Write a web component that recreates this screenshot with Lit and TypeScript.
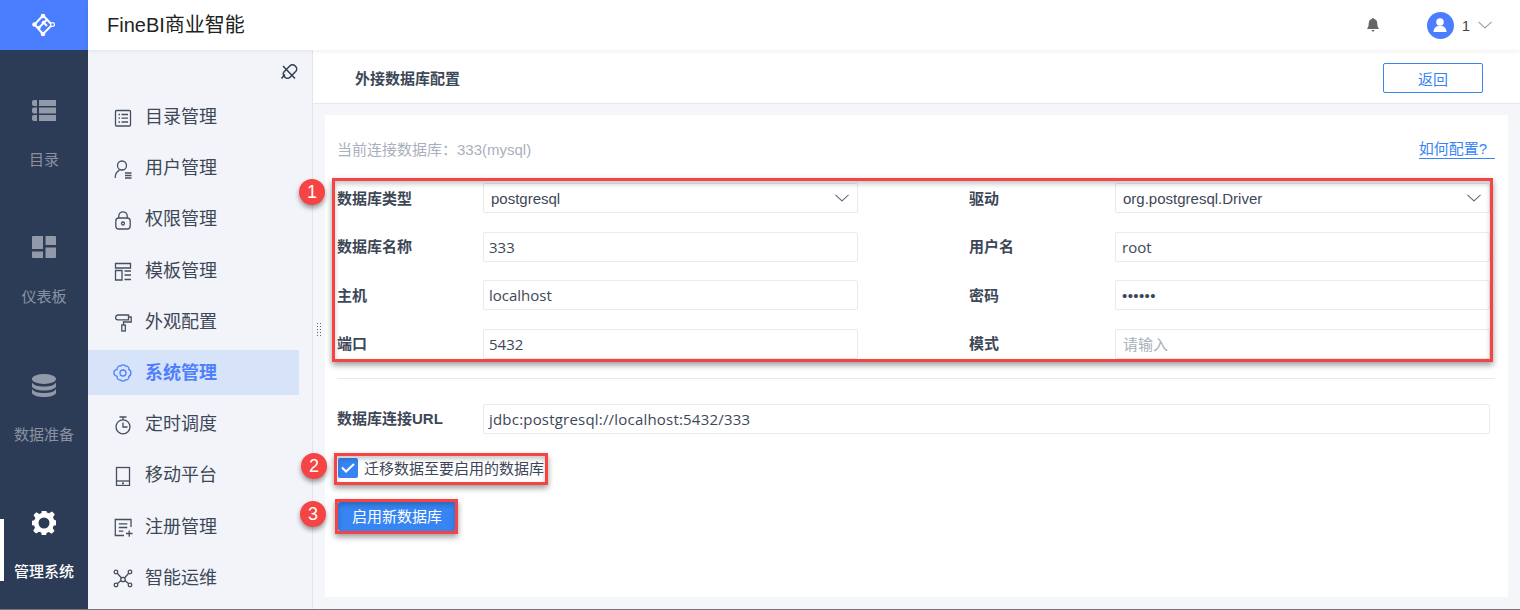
import { LitElement, html, css, svg } from "lit";
import { customElement } from "lit/decorators.js";

const S = (c: unknown) => html`<svg viewBox="0 0 20 20" width="20" height="20" fill="none" stroke="currentColor" stroke-width="1.300">${c}</svg>`;
const menu = [
  ["目录管理", S(svg`<rect x="2.500" y="2.500" width="15" height="15.500" rx="1"/><path d="M5.500 6.500h1.500M8.500 6.500h6.500M5.500 10.200h1.500M8.500 10.200h6.500M5.500 14h1.500M8.500 14h6.500"/>`)],
  ["用户管理", S(svg`<circle cx="9" cy="6.500" r="4.500"/><path d="M2.200 19c0-4 1.800-6.500 4.300-7.800M12 14h6.500M12 16.500h6.500M12 19h6.500"/>`)],
  ["权限管理", S(svg`<rect x="2.800" y="8" width="14.400" height="11" rx="3"/><path d="M5.800 8V6a4.200 4.200 0 0 1 8.400 0v2"/><circle cx="10" cy="13.500" r="1.500"/>`)],
  ["模板管理", S(svg`<path d="M2.500 2.500h15v4.500h-15zM2.500 9.500h6.500v9.500h-6.500zM11.500 10h6.500M11.500 14h6.500M11.500 18.500h6.500"/>`)],
  ["外观配置", S(svg`<path d="M5 3h10.500v4.800H5a2.400 2.400 0 0 1 0-4.800zM15.500 5h2.700v5H10.500v3"/><rect x="8.800" y="13" width="3.500" height="6"/>`)],
  ["系统管理", S(svg`<path d="M17.800 10a3 3 0 0 1-2 3.300 3 3 0 0 1-3.500 3.700 3 3 0 0 1-4.600 0 3 3 0 0 1-3.500-3.700 3 3 0 0 1 0-6.600 3 3 0 0 1 3.500-3.700 3 3 0 0 1 4.600 0 3 3 0 0 1 3.500 3.700 3 3 0 0 1 2 3.300z" stroke-linejoin="round"/><circle cx="10" cy="10" r="3"/>`)],
  ["定时调度", S(svg`<circle cx="10" cy="11.800" r="7"/><path d="M6.500 2h7M10 2v3M10 7.500v4.500h4.500"/>`)],
  ["移动平台", S(svg`<rect x="3.500" y="1.500" width="13" height="18"/><path d="M3.500 15h13"/><path d="M9 16.600h2v1.600H9z" fill="currentColor" stroke="none"/>`)],
  ["注册管理", S(svg`<path d="M18 10V2.500H2.300V18.500H11M5.800 6.800h8.500M5.800 10.500h8.500M5.800 14.200h4.500M13 16.500h6.500M16.200 13.500v6.200"/>`)],
  ["智能运维", S(svg`<circle cx="10" cy="11.500" r="2.200"/><circle cx="3" cy="4" r="1.800"/><circle cx="17" cy="4" r="1.800"/><circle cx="3" cy="17" r="1.800"/><circle cx="17" cy="17" r="1.800"/><path d="M4.300 5.300 8.500 10M15.700 5.300 11.500 10M4.300 15.700 8 12.500M15.700 15.700 12 12.500"/>`)],
] as const;

const rail = [
  ["目录", svg`<path d="M2 1h3v6H2a2 2 0 0 1-2-2V3a2 2 0 0 1 2-2zM2 8.500h3v6H2a2 2 0 0 1-2-2v-2a2 2 0 0 1 2-2zM2 16h3v6H2a2 2 0 0 1-2-2v-2a2 2 0 0 1 2-2zM7 1h17v6H7zM7 8.500h17v6H7zM7 16h17v6H7z"/>`],
  ["仪表板", svg`<path d="M1 0h10v13H0V1a1 1 0 0 1 1-1zM13.500 0H23a1 1 0 0 1 1 1v8H13.500zM13.500 11.500H24V21a1 1 0 0 1-1 1h-9.500zM0 15.500h11V22H1a1 1 0 0 1-1-1z"/>`],
  ["数据准备", svg`<ellipse cx="12" cy="5" rx="12" ry="5"/><path d="M0 8.500c2 3 6 4 12 4s10-1 12-4v4c-1 2.500-6 4-12 4S1 15 0 12.500zM0 15c2 3 6 4 12 4s10-1 12-4v4c-1 2.500-6 4-12 4S1 21.500 0 19z"/>`],
  ["管理系统", svg`<path fill-rule="evenodd" d="M10 -1h4l.8 3.400 2.200.9 3-1.800 2.800 2.800-1.800 3 .9 2.200L25 11v4l-3.400.8-.9 2.200 1.800 3-2.800 2.800-3-1.800-2.200.9L14 26h-4l-.8-3.400-2.200-.9-3 1.800-2.800-2.800 1.800-3-.9-2.200L-1 15v-4l3.400-.8.9-2.200-1.800-3 2.800-2.800 3 1.800 2.200-.9zM12 7.500a5.500 5.500 0 1 0 0 11 5.500 5.500 0 0 0 0-11z" transform="translate(0 -1)"/>`],
] as const;

const chevron = html`<svg class="chev" viewBox="0 0 14 8" width="14" height="8" fill="none" stroke="currentColor" stroke-width="1.100"><path d="M.5.8 7 7 13.500.8"/></svg>`;

@customElement("form-field")
class FormField extends LitElement {
  static properties = { value: {}, kind: {} };
  value = "";
  kind = "";
  static styles = css`
    :host { display: block; }
    .box { display: flex; align-items: center; justify-content: space-between; box-sizing: border-box; height: 30px;
      border: 1px solid #e8eaee; border-radius: 2px; background: #fff; color: #3d4757; font-size: 15px; padding: 0 8px 0 5px; white-space: nowrap;
      font-family: "Open Sans", "Noto Sans CJK SC", sans-serif; }
    .select { padding-left: 7px; font-family: "Liberation Sans", "Noto Sans CJK SC", sans-serif; }
    .narrow { padding-left: 6px; }
    .hint { padding-left: 7px; color: #a9b0bd; }
    .dots { padding-left: 6px; font-family: "Liberation Sans", sans-serif; letter-spacing: .4px; }
    .url { letter-spacing: .2px; }
    .chev { color: #667080; }
  `;
  render() {
    return html`<div class="box ${this.kind}"><span>${this.value}</span>${this.kind === "select" ? chevron : ""}</div>`;
  }
}

@customElement("app-root")
class AppRoot extends LitElement {
  static styles = css`
    :host { display: block; width: 1520px; height: 610px; overflow: hidden; position: relative;
      font-family: "Liberation Sans", "Noto Sans CJK SC", sans-serif; font-size: 15px; color: #3d4757; }
    .page { display: flex; height: 609px; border-bottom: 1px solid #777; }
    .rail { width: 88px; flex: none; background: #2c3c57; display: flex; flex-direction: column; }
    .logo { height: 50px; background: #4a7eff; display: flex; align-items: center; justify-content: center; flex: none; }
    .rail-items { display: flex; flex-direction: column; padding-top: 49px; }
    .rail-item { height: 137.300px; box-sizing: border-box; display: flex; flex-direction: column; align-items: center; color: #9299a9; gap: 27px; }
    .rail-item span { line-height: 20px; color: #8a92a2; }
    .rail-item.on { color: #fff; font-weight: 500; position: relative; }
    .rail-item.on span { color: #fff; }
    .rail-item.on::before { content: ""; position: absolute; left: 0; top: 8px; width: 4px; height: 62px; background: #fff; }
    .main { flex: 1; display: flex; flex-direction: column; min-width: 0; }
    .top { height: 50px; flex: none; background: #fff; display: flex; align-items: center; padding-left: 19px; padding-right: 28px;
      box-shadow: 0 1px 5px rgba(0,0,0,.07); position: relative; z-index: 2; }
    .title { font-size: 20px; color: #222; flex: 1; padding-bottom: 3px; }
    .bell { color: #666; display: flex; margin-right: 47px; }
    .avatar { width: 27px; height: 27px; border-radius: 50%; background: #4a7eff; display: flex; align-items: center; justify-content: center; }
    .user { color: #444; margin: 0 8px; font-size: 15px; }
    .top .chev { color: #9aa1ad; }
    .body { flex: 1; display: flex; min-height: 0; }
    .side { width: 225px; flex: none; box-sizing: border-box; background: #f2f4f9; border-right: 1px solid #e2e5ec; display: flex; flex-direction: column; padding-right: 13px; }
    .pin { height: 44px; box-sizing: border-box; padding-top: 13px; display: flex; justify-content: flex-end; align-items: flex-start; color: #333e50; margin-right: 1px; }
    .menu { display: flex; flex-direction: column; gap: 6.200px; }
    .row { height: 45px; flex: none; display: flex; align-items: center; gap: 12px; padding-left: 25px; font-size: 18px; color: #3d4757; }
    .row span { margin-bottom: 3px; }
    .row svg { color: #454f60; flex: none; margin-top: 2px; }
    .row.on { background: #d6e3f9; color: #4e7ffd; font-weight: 700; }
    .row.on svg { color: #4e7ffd; }
    .content { flex: 1; min-width: 0; background: #f5f6f9; display: flex; flex-direction: column; }
    .head { height: 54px; flex: none; box-sizing: border-box; background: #fff; border-bottom: 1px solid #e6e8ee; display: flex; align-items: center; justify-content: space-between; padding: 3px 37px 0 42px; font-weight: 700; color: #3d4757; }
    .head > span { margin-top: -2px; }
    .back { width: 100px; height: 30px; box-sizing: border-box; border: 1px solid #3685f2; border-radius: 2px; color: #3685f2; display: flex; align-items: center; justify-content: center; font-weight: 400; }
    .split { position: absolute; left: 316px; top: 322px; width: 6px; height: 16px; background-image: radial-gradient(circle, #5a6475 .8px, transparent 1px); background-size: 3px 3px; }
    .card { margin: 11px 12px 12px; flex: 1; background: #fff; padding: 22px 13px 0 12px; }
    .info { height: 24px; display: flex; align-items: center; justify-content: space-between; color: #a9b0bd; margin-bottom: 22px; }
    .info > span:first-child { margin-top: -1px; }
    .how { color: #3685f2; border-bottom: 1.500px solid #3685f2; padding-right: 8px; line-height: 19px; margin-top: -1px; }
    .form { margin-left: 1px; display: grid; grid-template-columns: 145px 375px 112px 145px 375px; row-gap: 18.670px; align-items: center; }
    .lab { font-weight: 700; color: #3d4757; margin: -2px 0 0 -1px; }
    hr { border: 0; height: 1px; background: #e6e8ee; margin: 19px 0 25px; }
    .url { margin-left: 1px; display: grid; grid-template-columns: 145px 1007px; align-items: center; }
    .check { margin: 24px 0 0 1px; height: 20px; display: flex; align-items: center; gap: 6px; white-space: nowrap; }
    .box { width: 20px; height: 20px; border-radius: 2px; background: #3685f2; display: flex; align-items: center; justify-content: center; }
    .go { margin: 24px 0 0 1px; width: 118px; height: 29px; box-sizing: border-box; padding-bottom: 2px; background: #3685f2; color: #fff; border-radius: 2px; display: flex; align-items: center; justify-content: center; }
    .mark { position: absolute; box-sizing: border-box; border: 3px solid #f64343; box-shadow: 0 3px 6px rgba(0,0,0,.4), inset 0 3px 5px rgba(0,0,0,.22); z-index: 5; }
    .m1 { left: 332px; top: 178px; width: 1161px; height: 184px; }
    .m2 { left: 334px; top: 453px; width: 214px; height: 32px; }
    .m3 { left: 335px; top: 499px; width: 123px; height: 35px; }
    .num { position: absolute; width: 26px; height: 26px; border-radius: 50%; background: #f64343; color: #fff; font-size: 18px; display: flex; align-items: center; justify-content: center; box-shadow: 0 3px 5px rgba(0,0,0,.4); z-index: 6; }
    .n1 { left: 299px; top: 179px; }
    .n2 { left: 301px; top: 453px; }
    .n3 { left: 300px; top: 501px; }
  `;

  field(label: string, value: string, kind = "") {
    return html`<div class="lab">${label}</div><form-field .value=${value} .kind=${kind}></form-field>`;
  }

  render() {
    return html`
      <div class="page">
        <nav class="rail">
          <div class="logo">
            <svg viewBox="0 0 24 24" width="24" height="24" fill="none" stroke="#fff" stroke-width="2">
              <path d="M11 2.500 2.500 11.500 11 21M11 2.500 15 6.500M11 21 20 12 15 6.500 7 14.500M11.500 9.500 15 13"/>
              <g fill="#fff" stroke="none"><circle cx="11" cy="3" r="2.300"/><circle cx="2.500" cy="11.500" r="2.300"/><circle cx="11" cy="21" r="2.300"/><circle cx="7" cy="14.500" r="1.800"/><circle cx="11.500" cy="9.500" r="1.800"/></g>
              <circle cx="20.500" cy="11.500" r="1.900" stroke-width="1.200" fill="#4a7eff"/>
            </svg>
          </div>
          <div class="rail-items">
            ${rail.map(([t, d], i) => html`<div class="rail-item ${i === 3 ? "on" : ""}">
              <svg viewBox="0 0 24 24" width="24" height="24" fill="currentColor">${d}</svg>
              <span>${t}</span></div>`)}
          </div>
        </nav>
        <div class="main">
          <header class="top">
            <div class="title">FineBI商业智能</div>
            <div class="bell"><svg viewBox="0 0 14 14" width="14" height="14" fill="currentColor"><path d="M7 0c.7 0 1 .5 1 1 2.200.5 3.300 2.300 3.300 4.500 0 2.500.7 4 1.700 5.500H1c1-1.500 1.700-3 1.700-5.500C2.700 3.300 3.800 1.500 6 1c0-.5.300-1 1-1zM5.500 12h3a1.500 1.500 0 0 1-3 0z"/></svg></div>
            <div class="avatar"><svg viewBox="0 0 16 16" width="16" height="16" fill="#fff"><circle cx="8" cy="5" r="3.800"/><path d="M1.500 15c0-3.500 2-5.500 4-6h5c2 .5 4 2.500 4 6z"/></svg></div>
            <span class="user">1</span>${chevron}
          </header>
          <div class="body">
            <aside class="side">
              <div class="pin"><svg viewBox="0 0 18 18" width="18" height="18" fill="none" stroke="currentColor" stroke-width="1.500"><rect x="2.500" y="4.500" width="15" height="8" rx="3.500" transform="rotate(-45 10 8.500)"/><path d="M3 3 15 15.500M5 11.500 1.500 15.500"/></svg></div>
              <div class="menu">
                ${menu.map(([t, icon], i) => html`<div class="row ${i === 5 ? "on" : ""}">${icon}<span>${t}</span></div>`)}
              </div>
            </aside>
            <main class="content">
              <div class="head"><span>外接数据库配置</span><div class="back">返回</div></div>
              <section class="card">
                <div class="info"><span>当前连接数据库：333(mysql)</span><span class="how">如何配置?</span></div>
                <div class="form">
                  ${this.field("数据库类型", "postgresql", "select")}<div></div>${this.field("驱动", "org.postgresql.Driver", "select")}
                  ${this.field("数据库名称", "333")}<div></div>${this.field("用户名", "root", "narrow")}
                  ${this.field("主机", "localhost")}<div></div>${this.field("密码", "••••••", "dots")}
                  ${this.field("端口", "5432")}<div></div>${this.field("模式", "请输入", "hint")}
                </div>
                <hr />
                <div class="url">${this.field("数据库连接URL", "jdbc:postgresql://localhost:5432/333", "url")}</div>
                <div class="check"><div class="box"><svg viewBox="0 0 14 10" width="14" height="10" fill="none" stroke="#fff" stroke-width="2"><path d="M1 4.500 5 8.500 13 1"/></svg></div><span>迁移数据至要启用的数据库</span></div>
                <div class="go">启用新数据库</div>
              </section>
            </main>
          </div>
        </div>
      </div>
      <div class="split"></div>
      <div class="mark m1"></div><div class="mark m2"></div><div class="mark m3"></div>
      <div class="num n1">1</div><div class="num n2">2</div><div class="num n3">3</div>
    `;
  }
}
